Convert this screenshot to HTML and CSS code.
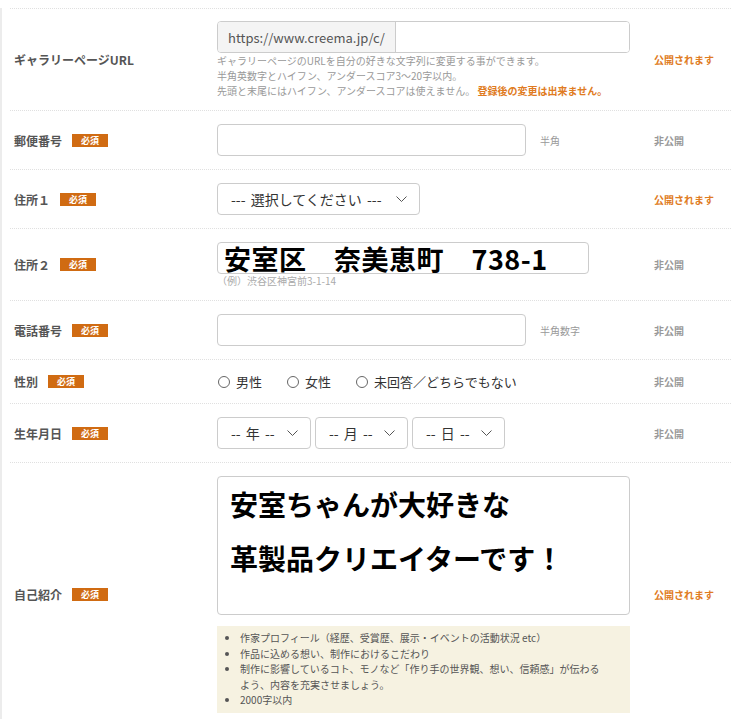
FILE: index.html
```html
<!DOCTYPE html>
<html lang="ja">
<head>
  <meta charset="UTF-8" />
  <title>プロフィール編集</title>
  <meta name="viewport" content="width=device-width, initial-scale=1.0" />
  <link rel="stylesheet" href="styles.css">
</head>
<body>

<div class="page">
  <div class="form">

    <!-- ギャラリーURL -->
    <div class="row row-url">
      <div class="label">ギャラリーページURL</div>
      <div class="field">
        <div class="url-input">
          <span class="url-prefix">https://www.creema.jp/c/</span>
          <input type="text" class="url-text">
        </div>
        <p class="help">ギャラリーページのURLを自分の好きな文字列に変更する事ができます。<br>半角英数字とハイフン、アンダースコア3～20字以内。<br>先頭と末尾にはハイフン、アンダースコアは使えません。 <strong class="warn">登録後の変更は出来ません。</strong></p>
      </div>
      <div class="public on">公開されます</div>
    </div>

    <div class="row">
      <div class="label">郵便番号 <span class="req">必須</span></div>
      <div class="field inline">
        <input type="text" class="text w-mid">
        <span class="side">半角</span>
      </div>
      <div class="public">非公開</div>
    </div>

    <div class="row">
      <div class="label">住所１ <span class="req">必須</span></div>
      <div class="field inline">
        <div class="select">
          <select class="w-pref"><option>--- 選択してください ---</option></select>
          <svg width="11" height="7" viewBox="0 0 11 7"><polyline points="0.5,0.5 5.5,5.5 10.5,0.5" fill="none" stroke="#555" stroke-width="1"/></svg>
        </div>
      </div>
      <div class="public on">公開されます</div>
    </div>

    <div class="row">
      <div class="label">住所２ <span class="req">必須</span></div>
      <div class="field">
        <input type="text" class="text big w-addr" value="安室区　奈美恵町　738-1">
        <p class="example">（例）渋谷区神宮前3-1-14</p>
      </div>
      <div class="public">非公開</div>
    </div>

    <div class="row">
      <div class="label">電話番号 <span class="req">必須</span></div>
      <div class="field inline">
        <input type="text" class="text w-mid">
        <span class="side">半角数字</span>
      </div>
      <div class="public">非公開</div>
    </div>

    <div class="row">
      <div class="label">性別 <span class="req">必須</span></div>
      <div class="field radios">
        <label><input type="radio" name="sex">男性</label>
        <label><input type="radio" name="sex">女性</label>
        <label><input type="radio" name="sex">未回答／どちらでもない</label>
      </div>
      <div class="public">非公開</div>
    </div>

    <div class="row">
      <div class="label">生年月日 <span class="req">必須</span></div>
      <div class="field inline birth">
        <div class="select">
          <select class="w-year"><option>-- 年 --</option></select>
          <svg width="11" height="7" viewBox="0 0 11 7"><polyline points="0.5,0.5 5.5,5.5 10.5,0.5" fill="none" stroke="#555" stroke-width="1"/></svg>
        </div>
        <div class="select">
          <select class="w-day"><option>-- 月 --</option></select>
          <svg width="11" height="7" viewBox="0 0 11 7"><polyline points="0.5,0.5 5.5,5.5 10.5,0.5" fill="none" stroke="#555" stroke-width="1"/></svg>
        </div>
        <div class="select">
          <select class="w-day"><option>-- 日 --</option></select>
          <svg width="11" height="7" viewBox="0 0 11 7"><polyline points="0.5,0.5 5.5,5.5 10.5,0.5" fill="none" stroke="#555" stroke-width="1"/></svg>
        </div>
      </div>
      <div class="public">非公開</div>
    </div>

    <div class="row">
      <div class="label">自己紹介 <span class="req">必須</span></div>
      <div class="field">
        <textarea class="intro">安室ちゃんが大好きな
革製品クリエイターです！</textarea>
        <ul class="tips">
          <li>作家プロフィール（経歴、受賞歴、展示・イベントの活動状況 etc）</li>
          <li>作品に込める想い、制作におけるこだわり</li>
          <li>制作に影響しているコト、モノなど「作り手の世界観、想い、信頼感」が伝わるよう、内容を充実させましょう。</li>
          <li>2000字以内</li>
        </ul>
      </div>
      <div class="public on">公開されます</div>
    </div>

  </div>
</div>

</body>
</html>
```

FILE: styles.css
```css
* {
  box-sizing: border-box;
  margin: 0;
  padding: 0;
}

body {
  font-family: "Noto Sans CJK JP", "Noto Sans", sans-serif;
  color: #333;
  background: #fff;
  overflow: hidden;
}

.page {
  border-left: 2px solid #ececec;
  min-height: 100vh;
  padding-left: 8px;
}

.form {
  margin-top: 8px;
  border-top: 1px dotted #e0e0e0;
}

.row {
  display: grid;
  grid-template-columns: 207px 437px 1fr;
  align-items: center;
  padding: 13px 0;
  border-bottom: 1px dotted #e0e0e0;
}

.row-url {
  padding: 12px 0;
}

.label {
  display: flex;
  align-items: center;
  gap: 10px;
  padding-left: 4px;
  font-size: 12px;
  font-weight: bold;
  color: #555;
}

.req {
  display: inline-block;
  width: 36px;
  height: 13px;
  line-height: 13px;
  background: #d06b12;
  color: #fff;
  font-size: 9px;
  font-weight: bold;
  text-align: center;
}

.public {
  font-size: 10px;
  font-weight: bold;
  color: #999;
}

.public.on {
  color: #e07b22;
}

.inline {
  display: flex;
  align-items: center;
}

/* text inputs */
.text {
  height: 32px;
  border: 1px solid #ccc;
  border-radius: 4px;
  background: #fff;
  font-family: inherit;
  outline: none;
}

.w-mid { width: 309px; }
.w-addr { width: 372px; }

.big {
  display: block;
  padding: 0 6px;
  font-size: 27px;
  font-weight: bold;
  letter-spacing: 0.5px;
  color: #000;
}

.side {
  margin-left: 14px;
  font-size: 10px;
  color: #999;
}

.example {
  font-size: 10px;
  line-height: 13px;
  color: #aaa;
}

/* url */
.url-input {
  display: flex;
  width: 413px;
  height: 32px;
  border: 1px solid #ccc;
  border-radius: 4px;
  overflow: hidden;
}

.url-prefix {
  display: flex;
  align-items: center;
  width: 178px;
  padding-left: 10px;
  background: #f4f4f4;
  border-right: 1px solid #ccc;
  font-size: 13px;
  color: #555;
}

.url-text {
  flex: 1;
  border: none;
  outline: none;
}

.help {
  font-size: 10px;
  line-height: 15px;
  color: #999;
}

.warn {
  color: #e07b22;
}

/* selects */
.select {
  position: relative;
  display: flex;
  flex: none;
}

.select select {
  display: block;
  appearance: none;
  -webkit-appearance: none;
  height: 32px;
  padding: 0 30px 0 13px;
  border: 1px solid #ccc;
  border-radius: 4px;
  background: #fff;
  font-family: inherit;
  font-size: 14px;
  word-spacing: 2px;
  color: #333;
  outline: none;
}

.select svg {
  position: absolute;
  right: 13px;
  top: 13px;
  pointer-events: none;
}

.w-pref { width: 203px; }
.w-year { width: 94px; }
.w-day { width: 93px; }

.birth {
  gap: 4px;
}

/* radios */
.radios {
  display: flex;
  align-items: center;
  gap: 24px;
  height: 15px;
  font-size: 13px;
  color: #333;
}

.radios label {
  display: flex;
  align-items: center;
}

.radios input {
  appearance: none;
  -webkit-appearance: none;
  width: 12px;
  height: 12px;
  margin: 0 6px 0 1px;
  border: 1px solid #666;
  border-radius: 50%;
  background: #fff;
}

/* self intro */
.intro {
  display: block;
  width: 413px;
  height: 139px;
  padding: 0 12px;
  border: 1px solid #ccc;
  border-radius: 4px;
  font-family: inherit;
  font-size: 28px;
  font-weight: bold;
  line-height: 54px;
  color: #000;
  resize: none;
  outline: none;
}

.tips {
  width: 413px;
  margin-top: 11px;
  padding: 4px 25px 5px 23px;
  background: #f6f2e1;
  font-size: 10px;
  line-height: 15.5px;
  color: #555;
}
```
